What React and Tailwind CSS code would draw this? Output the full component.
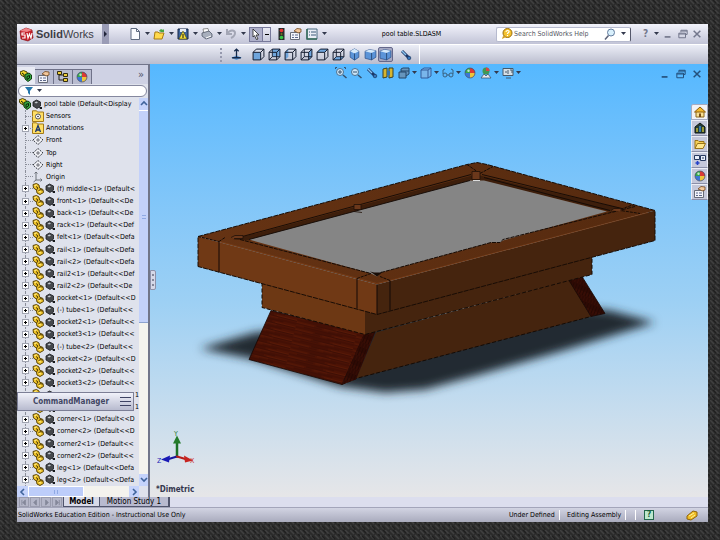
import React from "react";

const Caret = () => (
  <svg width="5" height="4" viewBox="0 0 5 4" className="shrink-0"><path d="M0 0h5L2.500 3z" fill="#33394d" /></svg>
);

const Svg = ({ s = 12, children }) => (
  <svg width={s} height={s} viewBox="0 0 12 12" className="shrink-0" fill="none">{children}</svg>
);

const Part = () => (
  <Svg>
    <path d="M1 1.500 4.500.5 7 2l.5 3 3.500 1.500.5 3L8 11.500 5 10 4.500 7 1.500 5z" fill="#f0c52a" stroke="#5a4406" />
    <path d="M4 3.500 6 5l-1.500 2M6.500 7.500 9 6.500l1.500 1" stroke="#3d2d00" strokeWidth=".9" />
    <path d="M2.500 2.500 4.500 2M7 8.500l2 .5" stroke="#fff29a" />
  </Svg>
);
const Assembly = () => (
  <Svg>
    <path d="M0 2 3.500.5 7 2l1 4-3 1.500L1 5z" fill="#f0d12d" stroke="#4b4208" />
    <path d="M5 4.500 9 3l2.500 2v4L8 11.500 5 9z" fill="#35a540" stroke="#123f12" />
    <path d="m2 3 2 1.500v2M7 6.500v3L9.500 8V5.500z" stroke="#0b2208" />
  </Svg>
);
const Ball = () => (
  <svg width="10" height="11" viewBox="0 0 10 11" className="shrink-0">
    <path d="M1 3 4.500 1 8.500 3v4L5 9.500 1 7z" fill="#45484c" stroke="#191b1e" strokeWidth=".8" />
    <path d="M2.500 3.500 4.500 2.500 6 3.500 4 4.500z" fill="#c6cad0" />
    <path d="M7 8h3v2H8z" fill="#17191c" />
  </svg>
);
const Folder = ({ letter }) => (
  <Svg>
    <path d="M.5 2V.8h4L5.500 2h6v9.500H.5z" fill="#ffdf66" stroke="#a27a18" />
    {letter ? <path d="M3.500 10 6 3.500 8.500 10M4.500 8h3" stroke="#17336f" strokeWidth="1.300" /> :
      <g><circle cx="6" cy="6.500" r="2.500" fill="#fff" stroke="#555" /><circle cx="6" cy="6.500" r=".8" fill="#222" /></g>}
  </Svg>
);
const Plane = () => (
  <Svg>
    <path d="M1 6 6 1.500 11 6 6 10.500z" fill="#f5f6fa" stroke="#30343c" strokeDasharray="2 1" />
    <path d="M4 6h4M6 4v4" stroke="#50545c" strokeWidth=".8" />
  </Svg>
);
const Origin = () => (
  <Svg>
    <path d="M4 1v8h6M4 9 1.500 11M2.500 2.500 4 1l1.500 1.500M8.500 7.500 10 9l-1.500 1.500" stroke="#6b7078" />
  </Svg>
);
const Globe = ({ s = 12 }) => (
  <Svg s={s}>
    <circle cx="6" cy="6" r="5" fill="#3c76d5" />
    <path d="M6 6V1a5 5 0 0 0-5 5z" fill="#37a84a" />
    <path d="M6 6V1a5 5 0 0 1 5 5z" fill="#db3b35" />
    <path d="M6 6h5a5 5 0 0 1-5 5z" fill="#edc53b" />
    <circle cx="6" cy="6" r="5" stroke="#4b5065" strokeWidth=".7" />
    <circle cx="4.500" cy="3.800" r="1.200" fill="#fff" opacity=".7" />
  </Svg>
);
const Props = () => (
  <Svg>
    <path d="M.5 4.500h9v7h-9z" fill="#f3f4fa" stroke="#686c78" />
    <path d="M2 7h2M2 9.500h2M5 7h3M5 9.500h3" stroke="#5c688b" />
    <path d="m4 3 3-2.500 4 .5v3L8 5 6.500 4z" fill="#f2c79a" stroke="#71461e" strokeWidth=".8" />
  </Svg>
);
const Config = () => (
  <Svg>
    <path d="M2 1v8h5M2 4h5" stroke="#25221c" />
    <path d="M.5.5h4v3h-4zM6.500 2.500h4v3h-4zM6.500 7.500h4v3h-4z" fill="#edce3c" stroke="#332c11" />
  </Svg>
);
const Home = () => (
  <Svg>
    <path d="M2 6v5h8V6" fill="#f9e094" stroke="#8c671a" />
    <path d="M.5 6 6 1l5.500 5z" fill="#f4b92c" stroke="#8c5d0b" />
    <path d="M5 7.500h2V11H5z" fill="#784d15" />
  </Svg>
);
const Library = () => (
  <Svg>
    <path d="M1 5 6 1l5 4v6H1z" fill="#263c34" stroke="#101b18" />
    <path d="M3 6v4M9 5v5" stroke="#e5d536" strokeWidth="1.200" />
    <path d="M6 4v6" stroke="#3f8dd8" strokeWidth="1.500" />
  </Svg>
);
const OpenFolder = () => (
  <Svg>
    <path d="M1 10.500v-8h3l1 1h5v2" fill="#f5cf55" stroke="#9b7418" />
    <path d="m1 10.500 2.500-5h8l-2.500 5z" fill="#ffe68a" stroke="#9b7418" />
  </Svg>
);
const Views = () => (
  <Svg>
    <path d="M.5 1.500h5v4h-5zM6.500 1.500h5v5h-5z" fill="#e9effb" stroke="#26385f" />
    <path d="M3.500 7v4M1.500 9h4" stroke="#2440c8" strokeWidth="1.600" />
    <path d="M8 4h2" stroke="#26385f" />
  </Svg>
);
const Cube = ({ face = 0 }) => {
  const faces = [
    "M1 4h7v7H1z", "M4 1h7v7H4z", "M1 4 4 1v7l-3 3z", "M8 4l3-3v7l-3 3z", "M1 4 4 1h7L8 4z", "M1 11 4 8h7l-3 3z",
  ];
  return (
    <Svg s={13}>
      <path d={faces[face]} fill="#6fa5dc" />
      <path d="M1 4h7v7H1zM1 4 4 1h7L8 4M11 1v7l-3 3" stroke="#111a2c" strokeWidth=".9" />
      {face % 2 === 1 && <path d="M4 1v7h7M4 8 1 11" stroke="#111a2c" strokeWidth=".8" />}
    </Svg>
  );
};
const Solid = ({ wide }) => (
  <Svg s={13}>
    <path d={wide ? "M1 3 5 1.500l6 1v6L7 11 1 9.500z" : "M2 3 6 .8 10 3v5.500L6 11.200 2 8.500z"} fill="#5b94d8" stroke="#31558d" strokeWidth=".7" />
    <path d={wide ? "m1 3 6 1.500 4-2-6-1z" : "m2 3 4 2 4-2L6 .8z"} fill="#d5e9fa" />
    <path d={wide ? "M7 4.500V11" : "M6 5v6"} stroke="#26466f" strokeWidth=".8" />
  </Svg>
);
const Tool = () => (
  <Svg>
    <path d="m2 2 7 7" stroke="#1d3768" strokeWidth="3" />
    <path d="m2 2 4 4" stroke="#8cc6ef" strokeWidth="1.500" />
    <circle cx="9" cy="9" r="1.800" fill="#3674ba" stroke="#17355e" strokeWidth=".7" />
  </Svg>
);
const Lens = ({ area }) => (
  <Svg>
    <circle cx="5" cy="5" r="3.500" fill="#cde6f8" stroke="#4d708f" />
    <path d="m8 8 3.500 3" stroke="#33506e" strokeWidth="1.500" />
    {area ? <path d="M3 5h4" stroke="#355371" /> : <path d="M3 5h4M5 3v4M.5 2V.5H2M9 .5h1.500V2" stroke="#355371" />}
  </Svg>
);
const Restore = () => (
  <Svg s={10}><path d="M3.500 4V1.500h7.500v5H9M1 5h8v5.500H1zM1 6h8M4 2.500h7" stroke="currentColor" strokeWidth="1.200" /></Svg>
);
const Close = () => (
  <Svg s={10}><path d="m2 2 8 8M10 2l-8 8" stroke="currentColor" strokeWidth="1.800" /></Svg>
);
const Minus = () => (
  <Svg s={10}><path d="M2 9.500h7" stroke="currentColor" strokeWidth="2" /></Svg>
);

const fileTools = [
  ["New", <Svg><path d="M2 .5h5.500l3 3v8H2z" fill="#fbfcff" stroke="#5f6b80" /><path d="M7.500.5v3h3" stroke="#5f6b80" /></Svg>],
  ["Open", <Svg><path d="m1 11 1-7h3l1 1h5l-2 6z" fill="#ffd94c" stroke="#a67b12" /><path d="M6 3c1-2 3-2 4-1l1-1v3H8" fill="#48a543" /></Svg>],
  ["Save", <Svg><path d="M1 1h10v10H1z" fill="#3f659c" stroke="#152544" /><path d="M3 1h6v3H3z" fill="#e8ecf4" /><path d="m6 3 4 8H2z" fill="#f6e13a" stroke="#44400b" strokeWidth=".6" /><path d="M6 6v4" stroke="#111" /></Svg>],
  ["Print", <Svg><path d="m2 1 5-.5 1 4-5 1z" fill="#fff" stroke="#777" strokeWidth=".8" /><path d="m1 5 7-2 3 3v3l-6 2-4-3z" fill="#a8afbd" stroke="#505868" strokeWidth=".8" /><path d="m5 10 5-2" stroke="#fff" /></Svg>],
  ["Undo", <Svg><path d="M2 1v5h5M2 6c3-5 8-4 8-1 0 3-2 4-4 5" stroke="#a3a6b5" strokeWidth="2" /></Svg>],
];

const viewTools = [
  ["Normal To", <Svg s={13}><path d="m1 9 5-2 5 2-5 2z" fill="#5f9bd9" /><path d="M6 9V1M4 3l2-2 2 2M2 9h8" stroke="#14294b" strokeWidth="1.200" /></Svg>],
  ["Front", <Cube face={0} />], ["Back", <Cube face={1} />], ["Left", <Cube face={2} />],
  ["Right", <Cube face={3} />], ["Top", <Cube face={4} />], ["Bottom", <Cube face={5} />],
  ["Isometric", <Solid />], ["Trimetric", <Solid wide />],
];

const tree = [
  ["root", "pool table  (Default<Display"], ["sensor", "Sensors"], ["note", "Annotations"],
  ["plane", "Front"], ["plane", "Top"], ["plane", "Right"], ["origin", "Origin"],
  ["part", "(f) middle<1> (Default<"], ["part", "front<1> (Default<<De"], ["part", "back<1> (Default<<De"],
  ["part", "rack<1> (Default<<Def"], ["part", "felt<1> (Default<<Defa"], ["part", "rail<1> (Default<<Defa"],
  ["part", "rail<2> (Default<<Defa"], ["part", "rail2<1> (Default<<Def"], ["part", "rail2<2> (Default<<De"],
  ["part", "pocket<1> (Default<<D"], ["part", "(-) tube<1> (Default<<"], ["part", "pocket2<1> (Default<<"],
  ["part", "pocket3<1> (Default<<"], ["part", "(-) tube<2> (Default<<"], ["part", "pocket<2> (Default<<D"],
  ["part", "pocket2<2> (Default<<"], ["part", "pocket3<2> (Default<<"],
  ["covered", "1"], ["covered", "1"],
  ["part", "corner<1> (Default<<D"], ["part", "corner<2> (Default<<D"], ["part", "corner2<1> (Default<<"],
  ["part", "corner2<2> (Default<<"], ["part", "leg<1> (Default<<Defa"], ["part", "leg<2> (Default<<Defa"],
];
const treeIcons = { root: <Assembly />, sensor: <Folder />, note: <Folder letter />, plane: <Plane />, origin: <Origin />, part: <Part />, covered: <Part /> };

function TreeRow({ kind, text }) {
  const root = kind === "root";
  const covered = kind === "covered";
  const part = kind === "part" || covered;
  return (
    <li className="flex min-h-0 flex-1 items-center whitespace-nowrap">
      {!root && (
        <span className="relative flex h-full w-3 shrink-0 items-center justify-center">
          <span className="absolute inset-y-0 left-1.5 border-l border-dotted border-[#8b8f9a]" />
          <span className="absolute left-1.5 w-2 border-t border-dotted border-[#8b8f9a]" />
          {(part || kind === "note") && (
            <button aria-label={"Expand " + text} className="relative flex size-[7px] items-center justify-center border border-[#a0a4b0] bg-white">
              <svg width="5" height="5" viewBox="0 0 5 5"><path d="M1 2.500h3M2.500 1v3" stroke="#000" /></svg>
            </button>
          )}
        </span>
      )}
      <span className="flex items-center pr-0.5">
        {root ? null : <span className="w-px" />}
        {treeIcons[kind]}
        {(root || part) && <span className="pl-px"><Ball /></span>}
      </span>
      <span className={covered ? "ml-auto" : ""}>{text}</span>
    </li>
  );
}

function PoolTable() {
  return (
    <svg viewBox="150 65 558 432" className="absolute inset-0 size-full" role="img" aria-label="Pool table assembly">
      <defs>
        <filter id="soft" x="-20%" y="-40%" width="140%" height="180%"><feGaussianBlur stdDeviation="5" /></filter>
        <pattern id="grain" width="61" height="7" patternUnits="userSpaceOnUse" patternTransform="rotate(14)">
          <rect width="61" height="7" fill="#4c1305" />
          <path d="M0 1h37M20 2.600h41M0 4.200h26M33 5h28M8 6.300h40" stroke="#350c04" strokeWidth=".7" />
          <path d="M40 1.500h21M0 3.300h18M28 3.800h14" stroke="#5f1c09" strokeWidth=".6" />
        </pattern>
        <pattern id="grainSide" width="3" height="14" patternUnits="userSpaceOnUse" patternTransform="rotate(22)">
          <rect width="3" height="14" fill="#370d05" />
          <path d="M1 0v10M2.500 5v9" stroke="#1d0602" strokeWidth=".7" />
        </pattern>
        <linearGradient id="rail" x1="0" y1="0" x2="1" y2="0">
          <stop offset="0" stopColor="#663313" /><stop offset="1" stopColor="#552a0f" />
        </linearGradient>
      </defs>
      <path d="M200 349 255 333 400 320 585 309 610 311 655 323 560 352 480 375 425 390 385 393 340 387 250 359z" fill="#242c31" filter="url(#soft)" />
      <path d="M376 333 570 280 591 317 356 379z" fill="#45240e" />
      <path d="M342 385 356 379 591 317" fill="none" stroke="#150b05" strokeDasharray="4 2" />
      <path d="M271 311 249 360 342 385 365 334z" fill="url(#grain)" stroke="#180704" strokeWidth=".8" />
      <path d="M365 334 376 331 356 380 342 385 362 338z" fill="url(#grainSide)" />
      <path d="M569 281 582 277 605 314 591 317z" fill="url(#grainSide)" stroke="#180704" strokeWidth=".8" />
      <path d="M262 283 365 310V335L262 308z" fill="#6d3814" />
      <path d="M365 310 592 252V275L365 335z" fill="#45240e" />
      <path d="M262 283v25l103 27 227-60v-18" fill="none" stroke="#150b05" strokeDasharray="4 2" />
      <path d="M198 237 377 285V315L198 267z" fill="#703915" />
      <path d="M377 285 655 211V241L377 315z" fill="#45240e" />
      <path d="M198 237 467 165 477 163 487 165 655 211 377 285z" fill="url(#rail)" />
      <path d="M233 240 476 175 622 209 614 213 476 180 249 241z" fill="#3d1e0b" />
      <path d="M249 240 470 181 484 181 607 212 503 241 500 243 491 243 381 273 377 277 371 274z" fill="#858585" />
      <path d="M235 239 471 175M249 240 470 181M484 178 610 211M482 175 622 209" fill="none" stroke="#120905" strokeWidth=".9" />
      <path d="M240 240 371 274M381 273 491 243 500 243 503 240 635 207" fill="none" stroke="#160b05" strokeDasharray="4 1" />
      <path d="M219 242 377 284 390 281M390 281 648 213" fill="none" stroke="#81421a" strokeWidth=".7" />
      <path d="M198 267V237L467 165l10-2 10 2 168 46v30L377 315z" fill="none" stroke="#180c05" strokeDasharray="5 1" />
      <path d="M219 242v31M357 279v30M377 285v30M390 281v30" stroke="#130906" strokeWidth="1" />
      <path d="M357 279 371 274M390 281 380 277M198 237 219 242M219 242 225 238M467 165 480 174 493 167M617 211 634 205M614 210 640 214" fill="none" stroke="#160b05" strokeDasharray="3 1" />
      <path d="m231 238 4-2h8v3h-9M354 205h7v5h-7zM354 212l8 1M472 172h8v8h-8zM611 211l3-2h7v3" fill="#6b381b" stroke="#201008" strokeWidth=".8" />
      <path d="m370 272 3 2 4 3 4-3 1-2-2 1h-6z" fill="#1a0d06" />
      <path d="M473 181h7" stroke="#ddd" />
      <g strokeLinecap="round">
        <path d="M177 457V440" stroke="#1c7126" strokeWidth="2.500" /><path d="m173 444 4-8 4 8z" fill="#247b2b" />
        <path d="m177 457-10 3" stroke="#17179c" strokeWidth="2" /><path d="m170 456-9 4 8 3z" fill="#1919b5" />
        <path d="m177 457 10 3" stroke="#b91c19" strokeWidth="2" /><path d="m184 456 9 5-8 2z" fill="#c72420" />
      </g>
      <g className="font-['DejaVu_Sans_Condensed',sans-serif] text-[7px]">
        <text x="174" y="436" fill="#2d7a32">Y</text>
        <text x="157" y="463" fill="#2424b5">Z</text>
        <text x="190" y="463" fill="#c83030">X</text>
      </g>
    </svg>
  );
}

const hud = [
  [<Lens />, false, "w-[15px]", "Zoom to fit"], [<Lens area />, false, "w-4", "Zoom to area"], [<Tool />, false, "w-4", "Previous view"],
  [<Svg><path d="M1 2 5 1v9l-4 1zM7 1h4v9l-4 1z" fill="#d6b52e" stroke="#39402b" /><path d="M5 4h3v4H5z" fill="#3576ad" /></Svg>, false, "w-4", "Section view"],
  [<Svg><path d="M1 5h7v6H1zM3 5V2l2-1h6v6L8 9" fill="#6695bc" stroke="#254768" /><path d="M3 4h8" stroke="#254768" /></Svg>, true, "w-[22px]", "View orientation"],
  [<Svg><path d="M1 3 4 1h7v8l-3 2H1z" fill="#79b6eb" stroke="#345d9b" /><path d="M1 3h7v8M8 3l3-2" stroke="#345d9b" /></Svg>, true, "w-[22px]", "Display style"],
  [<Svg><circle cx="3" cy="8" r="2" stroke="#39607e" /><circle cx="9" cy="8" r="2" stroke="#39607e" /><path d="M5 8h2M1 7V3l2-1M11 7V3L9 2" stroke="#39607e" /></Svg>, true, "w-[22px]", "Hide or show items"],
  [<Globe />, false, "w-4", "Appearance"],
  [<Svg><circle cx="6" cy="4" r="3.500" fill="#409855" /><path d="M6 4V.5A3.500 3.500 0 0 1 9.500 4z" fill="#d74747" /><path d="m1 11 3-4 2 2 2-2 3 4z" fill="#e6e9ef" stroke="#34495d" strokeWidth=".7" /></Svg>, true, "w-[22px]", "Scene"],
  [<Svg><path d="M1 1.500h10v7H1zM4 11h5" fill="#d5dfe6" stroke="#46596a" /><path d="M3 5h2M6 3v4M8 3h2v3" stroke="#46596a" /></Svg>, true, "w-[22px]", "View settings"],
];

const sideTabs = [["Resources", <Home />], ["Design Library", <Library />], ["File Explorer", <OpenFolder />], ["View Palette", <Views />], ["Appearances", <Globe />], ["Custom Properties", <Props />]];

const Chevron = ({ dir }) => {
  const paths = { up: "m1 5 3-3 3 3", down: "m1 2 3 3 3-3", left: "M5 1 2 4l3 3", right: "m3 1 3 3-3 3" };
  return <svg width="8" height="8" viewBox="0 0 8 8"><path d={paths[dir]} fill="none" stroke="#40649c" strokeWidth="1.600" /></svg>;
};

export default function App() {
  return (
    <div className="relative h-screen min-h-[400px] overflow-hidden bg-[#2b2b2b] pt-6 pr-3 pb-[18px] pl-[17px] font-['DejaVu_Sans_Condensed','DejaVu_Sans',sans-serif] text-[7px] leading-[10px] text-black">
      <svg className="absolute inset-0 size-full" aria-hidden="true">
        <defs>
          <pattern id="weave" width="10" height="10" patternUnits="userSpaceOnUse">
            <path d="M0 0l4 4M5 0l4 4M0 5l4 4M5 5l4 4" stroke="#404040" strokeWidth="1.500" />
            <path d="M3 0l3 3M8 4l2 2M2 6l3 3" stroke="#1f1f1f" strokeWidth="1.200" />
          </pattern>
        </defs>
        <rect width="100%" height="100%" fill="url(#weave)" />
      </svg>

      <div className="relative flex h-full flex-col bg-[#dcdeee]">
        <header className="flex h-5 shrink-0 items-center bg-linear-to-b from-[#f2f3fb] to-[#c2c4d7]">
          <div className="flex w-[85px] items-center gap-0.5 pl-0.5">
            <svg width="15" height="15" viewBox="0 0 15 15">
              <path d="M1 4 7 1l6 2 1 8-5 3-7-2z" fill="#c4202a" stroke="#8c1018" strokeWidth=".7" />
              <path d="M1 4 7 1l6 2-5 2z" fill="#ef8589" />
              <path d="M6 6H3v2h3v3H3M8 6l1 5 1.500-4L12 11l1-5" fill="none" stroke="#fff" strokeWidth="1.200" />
            </svg>
            <span className="font-['Liberation_Sans',sans-serif] text-[11px] text-[#3d3d46]"><b>Solid</b>Works</span>
          </div>
          <button aria-label="Show menu" className="flex h-5 w-[7px] items-center justify-center bg-[#9a9cb6]">
            <svg width="3" height="6" viewBox="0 0 3 6"><path d="M0 0v6l3-3z" fill="#20243a" /></svg>
          </button>
          <div className="flex min-w-0 flex-1 items-center">
            <div className="flex items-center pl-5">
              {fileTools.map(([n, icon]) => (
                <button key={n} aria-label={n} className="flex w-6 items-center gap-1">{icon}<Caret /></button>
              ))}
            </div>
            <button aria-label="Select" className="flex h-[15px] w-[22px] items-center border border-[#77799a]">
              <span className="flex h-full w-[13px] items-center justify-center border-r border-[#77799a] bg-[#aeb0ca]">
                <svg width="9" height="11" viewBox="0 0 9 11"><path d="m1 0 6 6H4l2 4-1.500.6-2-4L1 8z" fill="#fff" stroke="#222" strokeWidth=".8" /></svg>
              </span>
              <span className="m-auto h-px w-1 bg-black" />
            </button>
            <button aria-label="Rebuild" className="ml-px flex w-[18px] justify-center">
              <svg width="7" height="12" viewBox="0 0 7 12"><rect x=".5" width="6" height="12" fill="#292c2c" /><circle cx="3.500" cy="2.500" r="1.800" fill="#e53232" /><circle cx="3.500" cy="6" r="1" fill="#75701d" /><circle cx="3.500" cy="9.500" r="1.800" fill="#34c544" /></svg>
            </button>
            <button aria-label="File properties" className="w-4"><Props /></button>
            <button aria-label="Options" className="flex items-center gap-1">
              <Svg><path d="M1 1h10v10H1z" fill="#e9edf5" stroke="#4d6c83" /><path d="M1 1v10h10" stroke="#356b58" strokeWidth="1.500" /><path d="M3 4h1M5 4h5M3 7h1M5 7h5" stroke="#3c5b7a" /></Svg><Caret />
            </button>
            <h1 className="flex-1 text-center">pool table.SLDASM</h1>
          </div>
          <label className="mr-3 flex h-[15px] w-[135px] shrink-0 items-center gap-px rounded-xs border border-[#b7bbcf] border-r-[#55586b] bg-white px-1">
            <Svg><circle cx="6.500" cy="5" r="4.500" fill="#f5c32f" stroke="#9a6d0c" /><path d="m2 8-1 3 4-2z" fill="#d49b1b" /><path d="M5 4c0-2 3.500-2 3 0L6.500 5.500V6M6.500 7v1" stroke="#fff" strokeWidth="1.200" /></Svg>
            <input aria-label="Search SolidWorks Help" placeholder="Search SolidWorks Help" className="w-0 min-w-0 flex-1 bg-transparent outline-none placeholder:text-[#55575f]" />
            <svg width="12" height="12" viewBox="0 0 12 12" fill="none"><circle cx="7" cy="4.500" r="3.500" fill="#d9f0fc" stroke="#637c9e" /><path d="m4.500 7.500-3.500 4" stroke="#5b6278" strokeWidth="1.500" /></svg>
            <span className="pl-1"><Caret /></span>
          </label>
          <div className="flex w-[65px] shrink-0 items-center justify-between pr-1.5 text-[#73778c]">
            <button aria-label="Help" className="flex items-center gap-1.5 text-[10px] font-bold">?<Caret /></button>
            <button aria-label="Minimize"><Minus /></button>
            <button aria-label="Restore"><Restore /></button>
            <button aria-label="Close"><Close /></button>
          </div>
        </header>

        <nav aria-label="Standard views" className="flex h-5 shrink-0 items-center border-t border-white bg-linear-to-b from-[#eceef7] to-[#babdce]">
          <div className="flex h-full items-center border-r border-white pl-[203px]">
            <span className="mr-1 h-3.5 w-px border-l-2 border-dotted border-[#9699ae]" />
            {viewTools.map(([n, icon], i) => (
              <button key={n} aria-label={n + " view"} className={i === 0 ? "flex w-6 justify-center pr-1" : "flex w-4 justify-center"}>{icon}</button>
            ))}
            <button aria-label="Dimetric view" className="flex h-[15px] w-[15px] items-center justify-center rounded-xs border border-[#65688b] bg-[#a5a8c2]"><Solid wide /></button>
            <button aria-label="View tools" className="flex w-[26px] justify-center"><Tool /></button>
          </div>
        </nav>

        <main className="flex min-h-0 flex-1">
          <aside className="relative flex w-[133px] shrink-0 flex-col border-t border-r-2 border-[#71758a] bg-[#dfe2ec]">
            <div className="flex h-[19px] shrink-0 items-end bg-[#cfd2e4]">
              {[["Feature tree", <Assembly />], ["Properties", <Props />], ["Configurations", <Config />], ["Display", <Globe />]].map(([n, icon], i) => (
                <button key={n} aria-label={n} className={i === 0 ? "flex h-[17px] w-[18px] items-center justify-center bg-[#e8eaf3]" : "flex h-[15px] w-[19px] items-center justify-center border-t border-r border-[#6f7289] bg-[#b9bcd0]"}>{icon}</button>
              ))}
              <button aria-label="More" className="ml-auto pr-1 pb-1 text-[11px] text-[#50546a]">»</button>
            </div>
            <button aria-label="Filter" className="mx-px my-px flex h-[12px] shrink-0 items-center gap-1 rounded-full border border-[#85889f] bg-white pl-1.5">
              <svg width="8" height="8" viewBox="0 0 8 8"><path d="M0 0h8L5 4v4L3 6V4z" fill="#2577ac" /></svg><Caret />
            </button>
            <div className="flex min-h-0 flex-1">
              <ul className="flex min-w-0 flex-1 flex-col pl-0.5">
                {tree.map(([k, t], i) => <TreeRow key={i} kind={k} text={t} />)}
              </ul>
              <div className="flex w-[9px] shrink-0 flex-col bg-[#f4f3ee]">
                <button aria-label="Scroll up" className="flex h-3 items-center justify-center bg-[#c5d3fb]"><Chevron dir="up" /></button>
                <div className="flex h-[55%] items-center justify-center border-y border-white border-b-[#8ca2cf] bg-[#c3d1fa]"><span className="h-1 w-1 border-y border-[#8fa9e4]" /></div>
                <button aria-label="Scroll down" className="mt-auto flex h-3 items-center justify-center bg-[#c5d3fb]"><Chevron dir="down" /></button>
              </div>
            </div>
            <div className="mr-[9px] flex h-[11px] shrink-0 bg-[#f4f3ee]">
              <button aria-label="Scroll left" className="flex w-[11px] items-center justify-center bg-[#c5d3fb]"><Chevron dir="left" /></button>
              <div className="flex w-14 items-center justify-center border border-white bg-[#bdcdfa]"><span className="h-1 w-1 border-x border-[#8fa9e4]" /></div>
              <button aria-label="Scroll right" className="ml-auto flex w-[10px] items-center justify-center bg-[#c5d3fb]"><Chevron dir="right" /></button>
            </div>
            <div className="absolute bottom-[86px] left-0 flex h-[19px] w-[117px] items-center justify-between border border-[#7c7f96] bg-linear-to-b from-[#f1f2fa] to-[#b8bbcf] pr-0.5 pl-[15px] text-[8px] font-bold text-[#424764]">
              CommandManager
              <svg width="11" height="10" viewBox="0 0 11 10"><path d="M0 .5h11M0 4.500h11M0 8.500h11" stroke="#3e4363" /></svg>
            </div>
          </aside>

          <section className="relative min-w-0 flex-1 bg-linear-to-b from-[#55b8ff] via-[#9dd0f4] via-55% to-[#e6e6e8]">
            <PoolTable />
            <div className="relative flex items-start justify-between pt-[3px] pr-1.5">
              <div className="flex pl-[185px]">
                {hud.map(([icon, caret, w, n]) => (
                  <button key={n} aria-label={n} className={"flex shrink-0 items-center gap-0.5 " + w}>{icon}{caret && <Caret />}</button>
                ))}
              </div>
              <div className="flex gap-1.5 pt-0.5 text-[#24507c]">
                <button aria-label="Minimize document"><Minus /></button>
                <button aria-label="Restore document"><Restore /></button>
                <button aria-label="Close document"><Close /></button>
              </div>
            </div>
            <div className="absolute top-10 right-0 flex w-[17px] flex-col">
              {sideTabs.map(([n, icon], i) => (
                <button key={n} aria-label={n} className={i === 0 ? "flex h-4 items-center justify-center rounded-tl-xs border border-[#a7abc0] bg-[#f1f2f6]" : "flex h-4 items-center justify-center border border-[#eceef6] border-b-[#8b8fa8] bg-[#c5c8da]"}>{icon}</button>
              ))}
            </div>
            <button aria-label="Collapse panel" className="absolute top-[206px] left-0 flex h-5 w-[6px] items-center justify-center rounded-r-xs border border-[#8d91a9] bg-[#d5d8e8]">
              <svg width="2" height="14" viewBox="0 0 2 14"><path d="M1 1v2M1 6v2M1 11v2" stroke="#34384c" /></svg>
            </button>
            <p className="absolute bottom-0.5 left-1.5 text-[8px] font-bold text-[#34364e]">*Dimetric</p>
          </section>
        </main>

        <div className="flex h-[10px] shrink-0 items-stretch">
          <div className="flex w-[46px] gap-px bg-[#b4b6c8] pl-0.5">
            {["M5 1 2 4l3 3zM1 1v6", "M5 1 2 4l3 3z", "m3 1 3 3-3 3z", "m2 1 3 3-3 3zM6 1v6"].map((p) => (
              <button key={p} aria-label="Change sheet" className="flex w-[10px] items-center justify-center border border-[#9a9cae]"><svg width="7" height="7" viewBox="0 0 8 8"><path d={p} fill="#85889a" stroke="#85889a" /></svg></button>
            ))}
          </div>
          <button className="w-[37px] border-x border-b border-[#50546c] bg-[#d8dae8] text-[8px] leading-[9px] font-bold">Model</button>
          <button className="w-[70px] border-r-2 border-b border-[#50546c] bg-[#b8bacf] text-[8px] leading-[9px]">Motion Study 1</button>
        </div>

        <footer className="flex h-[15px] shrink-0 items-center border-t border-[#a3a5ba] bg-linear-to-b from-[#d2d4e3] to-[#a9abbd] pl-px whitespace-nowrap">
          <span className="flex-1">SolidWorks Education Edition - Instructional Use Only</span>
          <span className="w-[50px]">Under Defined</span>
          <span className="h-2.5 w-2 border-l border-white" />
          <span className="w-[58px]">Editing Assembly</span>
          <span className="h-2.5 w-[11px] border-x border-white" />
          <button aria-label="Help" className="ml-2 flex size-[10px] items-center justify-center border border-[#23674b] bg-[#bde8ce] text-[8px] font-bold text-[#145c38]">?</button>
          <span className="flex w-[54px] justify-end pr-2.5">
            <Svg><path d="m1 7 6-5 4 1v4l-6 4-4-1z" fill="#efbd23" stroke="#8f620b" /><path d="m3 7 5-3M5 9l4-3" stroke="#fff29c" /></Svg>
          </span>
        </footer>
      </div>
    </div>
  );
}
